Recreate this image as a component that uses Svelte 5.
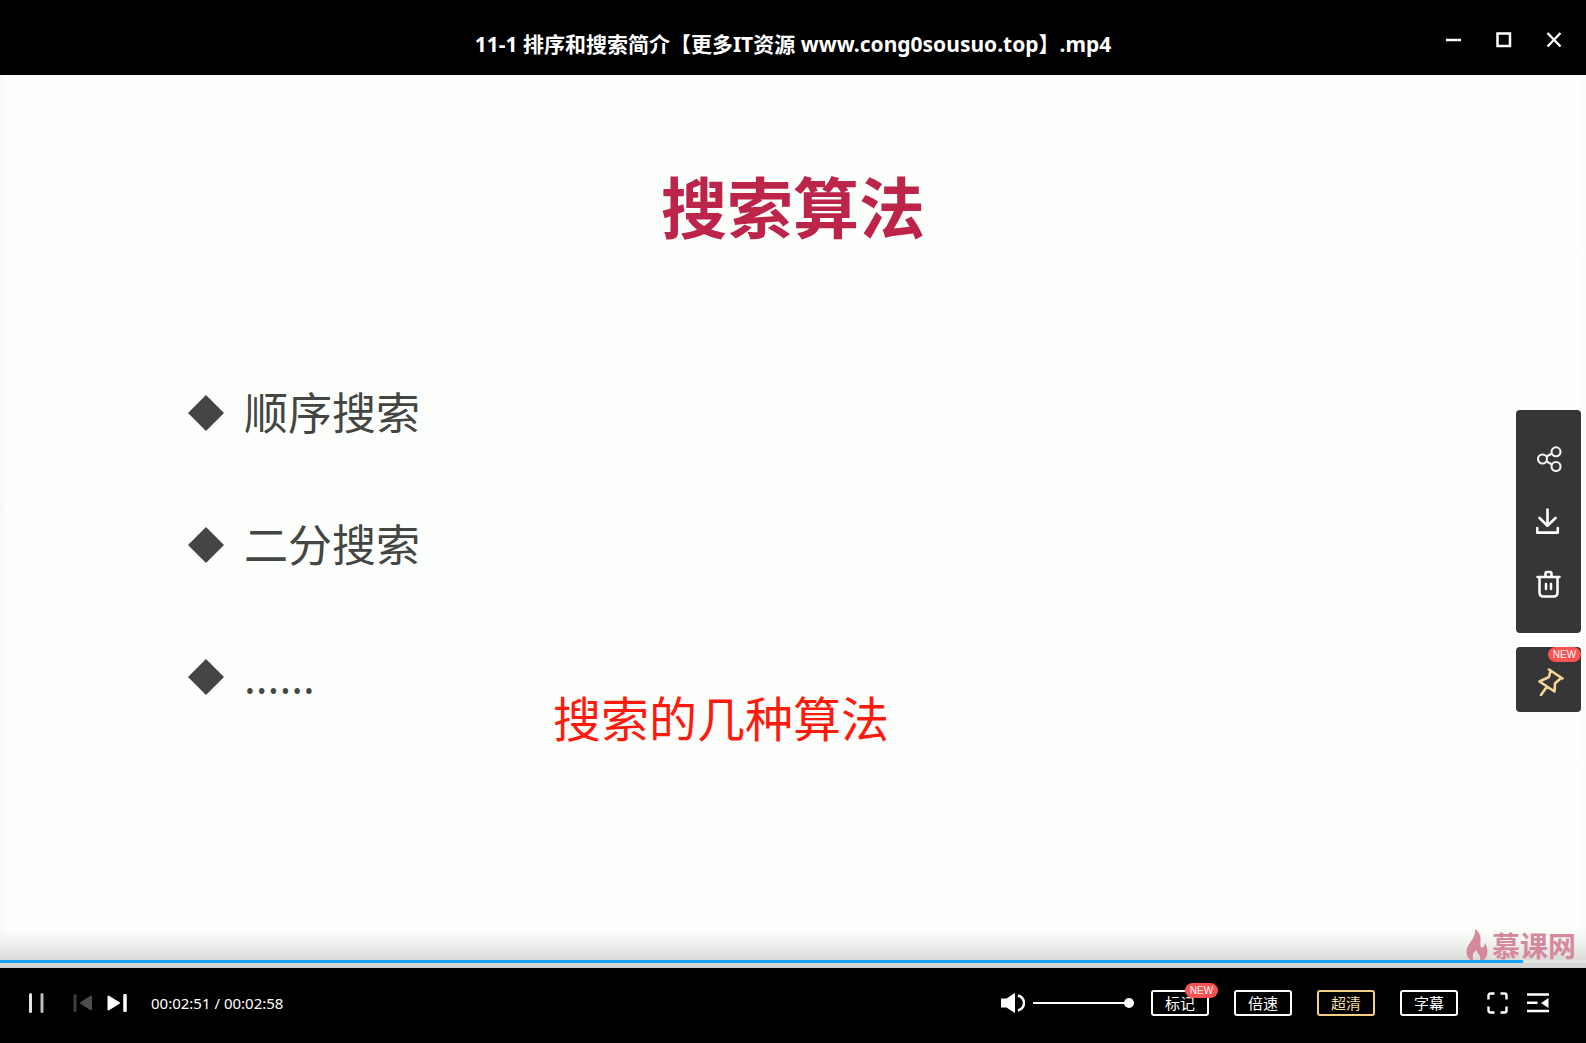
<script>
  let progress = $state(171);
  let volume = $state(100);
  const duration = 178.1;
  const topics = ['顺序搜索', '二分搜索', '......'];
  const options = [
    { label: '标记', isNew: true },
    { label: '倍速' },
    { label: '超清', active: true },
    { label: '字幕' }
  ];
</script>

<div class="player">
  <header class="titlebar">
    <div class="side"></div>
    <h1>11-1 排序和搜索简介【更多IT资源 www.cong0sousuo.top】.mp4</h1>
    <div class="side window-controls">
      <button aria-label="最小化">
        <svg width="16" height="16" viewBox="0 0 16 16"><path d="M0 8h15" stroke="#fff" stroke-width="2.500" /></svg>
      </button>
      <button aria-label="最大化">
        <svg width="16" height="16" viewBox="0 0 16 16"><rect x="1.500" y="1.500" width="12.500" height="12.500" fill="none" stroke="#fff" stroke-width="2.500" /></svg>
      </button>
      <button aria-label="关闭">
        <svg width="16" height="16" viewBox="0 0 16 16"><path d="M1.500 1l13 13.500M14.500 1L1.500 14.500" stroke="#fff" stroke-width="2.300" /></svg>
      </button>
    </div>
  </header>

  <main class="video">
    <h2>搜索算法</h2>
    <ul>
      {#each topics as topic}
        <li>
          <svg width="36" height="36" viewBox="0 0 36 36" aria-hidden="true"><path d="M18 0l18 18-18 18L0 18z" fill="#444643" /></svg>
          <span>{topic}</span>
        </li>
      {/each}
    </ul>
    <p class="caption">搜索的几种算法</p>

    <div class="shade"></div>

    <div class="watermark">
      <svg width="22" height="34" viewBox="0 0 22 34" aria-hidden="true">
        <path d="M9.500 0C14 4 15 8 14.500 12c-.3 3-.5 5 1 6.500C17.500 18.500 18.500 17 19 14c2.500 4 3 8 2 12-1 4-4 6.500-8.500 8 2-3 2.500-6 .5-8.500-1.500-1.500-2.500-2.500-2.500-4.500C6.500 23.500 5.500 28 8.500 33.500 3 31 0 27 .5 21.500 1 15 9 11 9.500 0z" fill="#d58a9b" />
      </svg>
      <span>慕课网</span>
    </div>

    <input class="seek" type="range" min="0" max={duration} step="0.1" bind:value={progress} aria-label="播放进度" style="--played: {(progress / duration) * 100}%" />

    <aside class="tools">
      <div class="tool-group">
        <button aria-label="分享">
          <svg width="26" height="26" viewBox="0 0 26 26" fill="none" stroke="#f2f2f2" stroke-width="2.100">
            <circle cx="6.500" cy="13" r="4.500" /><circle cx="20" cy="5.800" r="4.500" /><circle cx="20" cy="20.500" r="4.500" />
            <path d="M10.500 10.500l5.500-3M10.500 15.500l5.500 3" />
          </svg>
        </button>
        <button aria-label="下载">
          <svg width="26" height="26" viewBox="0 0 26 26" fill="none" stroke="#fff" stroke-width="2.600" stroke-linecap="round" stroke-linejoin="round">
            <path d="M11.500 1.500v16M3.500 10l8 7.800 8-7.800M1.200 20v4.600h20.600v-4.600" />
          </svg>
        </button>
        <button aria-label="删除">
          <svg width="26" height="28" viewBox="0 0 26 28" fill="none" stroke="#fff" stroke-width="2.500" stroke-linecap="round">
            <path d="M1.500 7h22M9.500 6.500V3.500q0-1.500 1.500-1.500h3q1.500 0 1.500 1.500v3M3.500 7.500v15q0 4 4 4h10q4 0 4-4v-15M10 14v5M15 14v5" />
          </svg>
        </button>
      </div>
      <button class="pin" aria-label="固定">
        <svg width="26" height="28" viewBox="0 0 26 28" fill="none" stroke="#f5d694" stroke-width="2.600" stroke-linecap="round" stroke-linejoin="round">
          <path d="M11 1.500L24.500 10.500M12.500 3L11 9 1.500 13.500 16.500 23.500 17 15.500 22.500 10.500M9 18.500L3 27" />
        </svg>
        <span class="badge">NEW</span>
      </button>
    </aside>
  </main>

  <footer class="controls">
    <div class="transport">
      <button aria-label="暂停">
        <svg width="16" height="20" viewBox="0 0 16 20" stroke-width="3" stroke-linecap="round"><path d="M2.500 1.500v17" stroke="#e4e4e4" /><path d="M14 1.500v17" stroke="#bdbdbd" /></svg>
      </button>
      <button class="prev" aria-label="上一个" disabled>
        <svg width="20" height="18" viewBox="0 0 20 18"><path d="M2 1.500v15" stroke="#3e3e3e" stroke-width="3" stroke-linecap="round" /><path d="M18 2.500v13L8 9z" fill="#4c4c4c" stroke="#4c4c4c" stroke-width="2" stroke-linejoin="round" /></svg>
      </button>
      <button class="next" aria-label="下一个">
        <svg width="20" height="18" viewBox="0 0 20 18"><path d="M18 1.500v15" stroke="#fff" stroke-width="3.500" stroke-linecap="round" /><path d="M1.500 2.500v13L12 9z" fill="#fff" stroke="#fff" stroke-width="2" stroke-linejoin="round" /></svg>
      </button>
      <span class="time">00:02:51 / 00:02:58</span>
    </div>

    <div class="settings">
      <div class="volume">
        <button aria-label="静音">
          <svg width="24" height="20" viewBox="0 0 24 20"><path d="M0 5.500h5.500L13 0.500Q14 0 14 1v18q0 1-1 .500L5.500 14.500H0z" fill="#fff" /><path d="M17 2.500q6 2 6 7.500t-6 7.500" fill="none" stroke="#fff" stroke-width="2.400" /></svg>
        </button>
        <input type="range" min="0" max="100" bind:value={volume} aria-label="音量" />
      </div>
      <div class="options">
        {#each options as option}
          <button class="option" class:active={option.active}>
            {option.label}
            {#if option.isNew}<span class="badge">NEW</span>{/if}
          </button>
        {/each}
      </div>
      <div class="view">
        <button aria-label="全屏">
          <svg width="22" height="22" viewBox="0 0 22 22" fill="none" stroke="#fff" stroke-width="2.400"><path d="M1.500 7.500V3.500q0-2 2-2h4M13.500 1.500h4q2 0 2 2v4M19.500 14.500v4q0 2-2 2h-4M7.500 20.500h-4q-2 0-2-2v-4" /></svg>
        </button>
        <button aria-label="播放列表">
          <svg width="22" height="20" viewBox="0 0 22 20"><path d="M0 1.500h22M0 9.700h10.500M0 18h22" stroke="#fff" stroke-width="2.600" /><path d="M21.500 5v10L14 10z" fill="#fff" /></svg>
        </button>
      </div>
    </div>
  </footer>
</div>

<style>
  :global(body) {
    margin: 0;
    background: #000;
  }
  .player {
    display: flex;
    flex-direction: column;
    min-height: 100vh;
    font-family: 'Noto Sans', 'Noto Sans CJK SC', sans-serif;
    color: #fff;
  }
  button {
    display: flex;
    align-items: center;
    justify-content: center;
    padding: 0;
    border: 0;
    background: none;
    color: inherit;
    font: inherit;
    cursor: pointer;
  }
  svg {
    display: block;
    flex: none;
  }
  .titlebar {
    display: grid;
    grid-template-columns: 1fr auto 1fr;
    align-items: center;
    height: 75px;
    background: #000;
  }
  h1 {
    margin: 0;
    padding-top: 12px;
    font-size: 21px;
    font-weight: bold;
    line-height: 30px;
    white-space: nowrap;
  }
  .window-controls {
    display: flex;
    justify-content: flex-end;
    gap: 34px;
    padding: 5px 24px 0 0;
  }
  .video {
    position: relative;
    display: flex;
    flex: 1;
    flex-direction: column;
    background: linear-gradient(90deg, #f6f8f5, #fdfffc 6px, #fdfffc calc(100% - 6px), #f9fbf8);
  }
  h2 {
    margin: 0;
    padding-top: 84px;
    color: #bc2549;
    font-size: 66px;
    font-weight: bold;
    line-height: 96px;
    text-align: center;
  }
  ul {
    display: flex;
    flex-direction: column;
    gap: 68px;
    margin: 0;
    padding: 126px 0 0 188px;
    list-style: none;
  }
  li {
    display: flex;
    align-items: center;
    gap: 20px;
    color: #444643;
    font-size: 44px;
    line-height: 64px;
  }
  .caption {
    position: absolute;
    top: 609px;
    left: 553px;
    margin: 0;
    color: #ff1a0d;
    font-size: 48px;
    line-height: 70px;
  }
  .shade {
    height: 40px;
    margin-top: auto;
    background: linear-gradient(#fdfffc00, #eff1ee 40%, #cfd1ce);
  }
  .watermark {
    position: absolute;
    right: 10px;
    bottom: 5px;
    display: flex;
    align-items: center;
    gap: 4px;
    color: #d58a9b;
    font-size: 28px;
    font-weight: bold;
    line-height: 34px;
  }
  .seek {
    position: absolute;
    bottom: 5px;
    left: 0;
    width: 100%;
    height: 3px;
    margin: 0;
    appearance: none;
    background: linear-gradient(90deg, #18a4fb var(--played), #e2e4e1 var(--played));
  }
  .seek::-webkit-slider-thumb {
    appearance: none;
    width: 0;
    height: 0;
  }
  .tools {
    position: absolute;
    top: 335px;
    right: 5px;
    display: flex;
    flex-direction: column;
    gap: 14px;
    width: 65px;
  }
  .tool-group {
    display: flex;
    flex-direction: column;
    align-items: center;
    gap: 36px;
    padding: 36px 0 35px;
    border-radius: 4px;
    background: #363636;
  }
  .pin {
    position: relative;
    height: 65px;
    padding: 4px 0 0 4px;
    border-radius: 4px;
    background: #363636;
  }
  .badge {
    position: absolute;
    top: 0;
    right: 0;
    width: 33px;
    border-radius: 8px;
    background: #fa5151;
    color: #fff;
    font: 10px/15px 'Liberation Sans', sans-serif;
    text-align: center;
  }
  .controls {
    display: flex;
    align-items: center;
    justify-content: space-between;
    height: 75px;
    padding: 0 37px 5px 28px;
    box-sizing: border-box;
    background: #000;
  }
  .transport,
  .settings,
  .volume,
  .options,
  .view {
    display: flex;
    align-items: center;
  }
  .prev {
    margin-left: 29px;
  }
  .next {
    margin-left: 14px;
  }
  .time {
    margin-left: 24px;
    font-size: 15px;
    line-height: 20px;
  }
  .volume {
    gap: 8px;
    margin-right: 17px;
  }
  .volume input {
    width: 101px;
    height: 10px;
    margin: 0;
    appearance: none;
    background: linear-gradient(#fff, #fff) center / 100% 2px no-repeat;
  }
  .volume input::-webkit-slider-thumb {
    appearance: none;
    width: 10px;
    height: 10px;
    border-radius: 50%;
    background: #fff;
  }
  .options {
    gap: 25px;
  }
  .option {
    position: relative;
    width: 58px;
    height: 26px;
    border: 2px solid #fff;
    border-radius: 3px;
    font-size: 15px;
    line-height: 20px;
  }
  .option.active {
    border-color: #f5cf83;
    color: #f7dc9d;
  }
  .option .badge {
    top: -9px;
    right: -11px;
  }
  .view {
    gap: 18px;
    margin-left: 29px;
  }
</style>
